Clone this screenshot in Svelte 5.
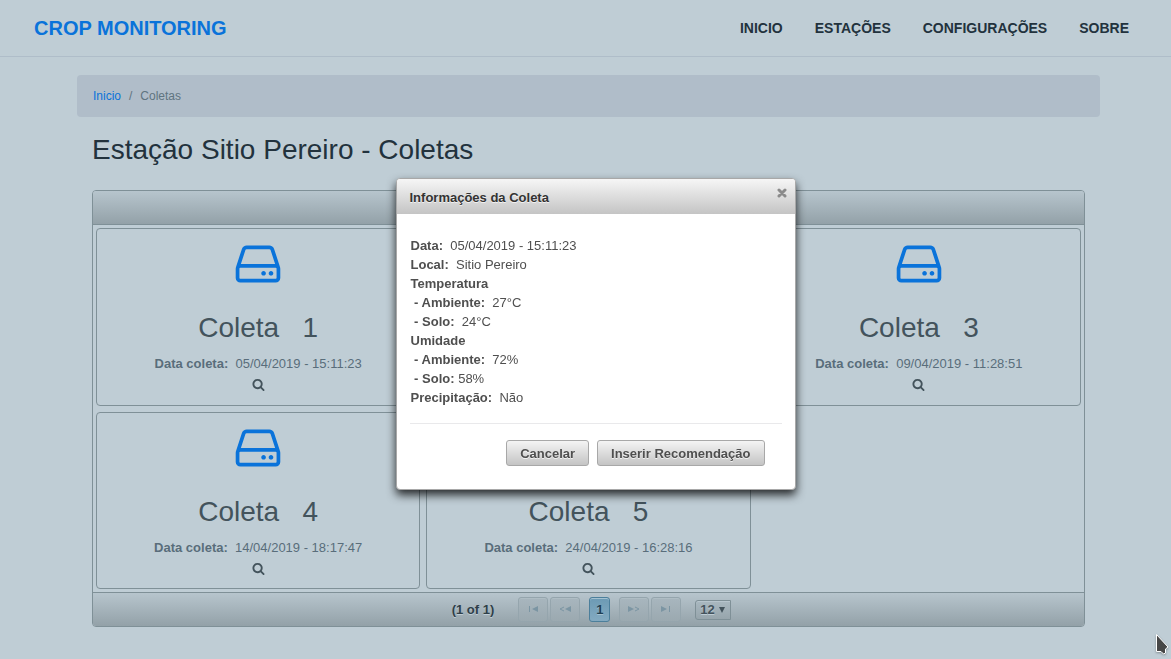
<script>
  const links = ['INICIO', 'ESTAÇÕES', 'CONFIGURAÇÕES', 'SOBRE'];
  const coletas = [
    { id: 1, data: '05/04/2019 - 15:11:23' },
    { id: 2, data: '' },
    { id: 3, data: '09/04/2019 - 11:28:51' },
    { id: 4, data: '14/04/2019 - 18:17:47' },
    { id: 5, data: '24/04/2019 - 16:28:16' }
  ];
  const info = [
    { label: 'Data:', value: '\u00a0 05/04/2019 - 15:11:23' },
    { label: 'Local:', value: '\u00a0 Sitio Pereiro' },
    { label: 'Temperatura', value: '' },
    { label: '\u00a0- Ambiente:', value: '\u00a0 27°C' },
    { label: '\u00a0- Solo:', value: '\u00a0 24°C' },
    { label: 'Umidade', value: '' },
    { label: '\u00a0- Ambiente:', value: '\u00a0 72%' },
    { label: '\u00a0- Solo:', value: '\u00a058%' },
    { label: 'Precipitação:', value: '\u00a0 Não' }
  ];
  let open = $state(true);
</script>

<header>
  <a class="brand" href="#inicio">CROP MONITORING</a>
  <nav>
    {#each links as link}
      <a href="#{link.toLowerCase()}">{link}</a>
    {/each}
  </nav>
</header>

<main>
  <ol class="breadcrumb">
    <li><a href="#inicio">Inicio</a></li>
    <li class="current">Coletas</li>
  </ol>

  <div class="content">
    <h1>Estação Sitio Pereiro - Coletas</h1>

    <section class="datagrid">
      <div class="grid-header"></div>
      <div class="cards">
        {#each coletas as coleta (coleta.id)}
          <article>
            <svg class="drive" viewBox="0 0 1792 1792" aria-hidden="true">
              <path d="M1168 1216q0 33-23.5 56.5t-56.5 23.5-56.5-23.5-23.5-56.5 23.5-56.5 56.5-23.5 56.5 23.5 23.5 56.5zm256 0q0 33-23.5 56.5t-56.5 23.5-56.5-23.5-23.5-56.5 23.5-56.5 56.5-23.5 56.5 23.5 23.5 56.5zm112 160v-320q0-13-9.5-22.5t-22.5-9.5h-1216q-13 0-22.5 9.5t-9.5 22.5v320q0 13 9.5 22.5t22.5 9.5h1216q13 0 22.5-9.5t9.5-22.5zm-1230-480h1180l-157-482q-4-13-16-21.5t-26-8.5h-782q-14 0-26 8.5t-16 21.5zm1358 160v320q0 66-47 113t-113 47h-1216q-66 0-113-47t-47-113v-320q0-25 16-75l197-606q17-53 63-86t101-33h782q55 0 101 33t63 86l197 606q16 50 16 75z" />
            </svg>
            <h2>Coleta &nbsp; {coleta.id}</h2>
            {#if coleta.data}
              <p><b>Data coleta:</b>&nbsp; {coleta.data}</p>
            {/if}
            <button class="search" aria-label="Ver coleta {coleta.id}" onclick={() => (open = true)}>
              <svg viewBox="0 0 1792 1792" aria-hidden="true">
                <path d="M1216 832q0-185-131.5-316.5t-316.5-131.5-316.5 131.5-131.5 316.5 131.5 316.5 316.5 131.5 316.5-131.5 131.5-316.5zm512 832q0 52-38 90t-90 38q-54 0-90-38l-343-342q-179 124-399 124-143 0-273.5-55.5t-225-150-150-225-55.5-273.5 55.5-273.5 150-225 225-150 273.5-55.5 273.5 55.5 225 150 150 225 55.5 273.5q0 220-124 399l343 343q37 37 37 90z" />
              </svg>
            </button>
          </article>
        {/each}
      </div>
      <div class="paginator">
        <span class="count">(1 of 1)</span>
        <div class="pair">
          <button disabled aria-label="Primeira">
            <svg viewBox="0 0 12 6"><path d="M2 0h1v6h-1zM11 0v6L5 3z" /></svg>
          </button>
          <button disabled aria-label="Anterior">
            <svg viewBox="0 0 12 6"><path d="M12 0v6L6 3z" /><path class="line" d="M5 1L1 3l4 2" /></svg>
          </button>
        </div>
        <button class="page">1</button>
        <div class="pair">
          <button disabled aria-label="Próxima">
            <svg viewBox="0 0 12 6"><path d="M0 0v6l6-3z" /><path class="line" d="M7 1L11 3l-4 2" /></svg>
          </button>
          <button disabled aria-label="Última">
            <svg viewBox="0 0 12 6"><path d="M9 0h1v6h-1zM1 0v6l6-3z" /></svg>
          </button>
        </div>
        <div class="rows">
          <select aria-label="Itens por página">
            <option>12</option>
            <option>24</option>
          </select>
          <svg viewBox="0 0 6 6" aria-hidden="true"><path d="M0 0h6L3 6z" /></svg>
        </div>
      </div>
    </section>
  </div>
</main>

{#if open}
  <div class="dialog" role="dialog" aria-labelledby="dialog-title">
    <div class="titlebar">
      <span id="dialog-title">Informações da Coleta</span>
      <button class="close" aria-label="Fechar" onclick={() => (open = false)}>
        <svg viewBox="0 0 10 10"><path d="M2 2l6 6M8 2l-6 6" /></svg>
      </button>
    </div>
    <div class="body">
      <div class="info">
        {#each info as row}
          <div><b>{row.label}</b>{row.value}</div>
        {/each}
      </div>
      <div class="actions">
        <button onclick={() => (open = false)}>Cancelar</button>
        <button>Inserir Recomendação</button>
      </div>
    </div>
  </div>
{/if}

<svg class="pointer" viewBox="0 0 14 22" aria-hidden="true">
  <path d="M1.500 1.500v17h4.500l2.500 2.500 2-1v-4l2.500-2z" />
</svg>

<style>
  :global(body) {
    background: #bfcdd5;
    color: #22323d;
    font-family: 'Liberation Sans', Arial, sans-serif;
    font-size: 13px;
  }
  a {
    color: #0a73da;
    text-decoration: none;
  }
  button {
    font: inherit;
    padding: 0;
    box-sizing: border-box;
  }
  header {
    display: flex;
    align-items: center;
    justify-content: space-between;
    height: 56px;
    padding: 0 42px 0 34px;
    border-bottom: 1px solid #afbdc9;
  }
  .brand {
    font-size: 20px;
    font-weight: bold;
  }
  nav {
    display: flex;
    gap: 32px;
  }
  nav a {
    color: #22323d;
    font-size: 14px;
    font-weight: bold;
  }
  main {
    padding: 18px 71px 32px 77px;
  }
  .breadcrumb {
    display: flex;
    margin: 0;
    padding: 12px 16px;
    background: #b0bdc9;
    border-radius: 4px;
    font-size: 12px;
    line-height: 18px;
    list-style: none;
  }
  .current {
    color: #5f7480;
  }
  .current::before {
    content: '/';
    padding: 0 8px;
  }
  .content {
    padding: 16px 15px 0;
  }
  h1 {
    margin: 0 0 23px;
    font-size: 28px;
    font-weight: normal;
    line-height: 34px;
  }
  .datagrid {
    border: 1px solid #7f9097;
    border-radius: 4px;
  }
  .grid-header {
    height: 33px;
    border-bottom: 1px solid #7f9097;
    border-radius: 3px 3px 0 0;
    background: linear-gradient(#b7c5cd, #93a1a8);
  }
  .cards {
    display: grid;
    grid-template-columns: repeat(3, 1fr);
    gap: 6px;
    min-height: 361px;
    padding: 3px;
  }
  article {
    display: flex;
    flex-direction: column;
    align-items: center;
    padding: 9px 0 12px;
    border: 1px solid #7f9097;
    border-radius: 4px;
    color: #43535c;
  }
  .drive {
    width: 52px;
    height: 52px;
    fill: #0a73da;
  }
  h2 {
    margin: 22px 0 10px;
    font-size: 28px;
    font-weight: normal;
    line-height: 32px;
    white-space: pre;
  }
  p {
    margin: 0;
    color: #596d7b;
    line-height: 20px;
  }
  .search {
    height: 13px;
    margin-top: 4px;
    border: 0;
    background: none;
  }
  .search svg {
    display: block;
    width: 13px;
    height: 13px;
    fill: #43535c;
  }
  .paginator {
    display: flex;
    align-items: center;
    justify-content: center;
    height: 33px;
    padding-left: 6px;
    border-top: 1px solid #7f9097;
    border-radius: 0 0 3px 3px;
    background: linear-gradient(#b7c5cd, #93a1a8);
    color: #2f3f48;
    font-weight: bold;
    text-shadow: 0 1px 0 #bfcdd5;
  }
  .count {
    margin-right: 24px;
  }
  .pair {
    display: flex;
    gap: 2px;
  }
  .pair button {
    display: grid;
    place-items: center;
    width: 30px;
    height: 25px;
    border: 1px solid #95a5ad;
    border-radius: 3px;
    background: linear-gradient(#a8b6be, #9ba9b0);
    box-shadow: inset 0 1px 0 #afbdc4;
  }
  .pair svg {
    width: 12px;
    height: 6px;
    margin-bottom: 2px;
    fill: #7b95a3;
  }
  .pair .line {
    fill: none;
    stroke: #7b95a3;
  }
  .page {
    width: 21px;
    height: 25px;
    margin: 0 9px;
    border: 1px solid #4c7f9b;
    border-radius: 3px;
    background: linear-gradient(#6c9ab4, #83aac1);
    box-shadow: inset 0 1px 0 #a5c2d1;
    color: #1e3f53;
    text-shadow: 0 1px 0 #a5c2d1;
  }
  .rows {
    display: grid;
    align-items: center;
    margin-left: 14px;
  }
  .rows select {
    grid-area: 1 / 1;
    width: 36px;
    height: 20px;
    padding: 0 4px;
    appearance: none;
    border: 1px solid #7f9097;
    border-radius: 3px 0 0 3px;
    background: linear-gradient(#a9b8c0, #97a5ac);
    box-shadow: inset 0 1px 0 #b7c5cd;
    color: #43535c;
    font: inherit;
    text-shadow: inherit;
  }
  .rows svg {
    grid-area: 1 / 1;
    justify-self: end;
    width: 6px;
    height: 6px;
    margin-right: 6px;
    fill: #43535c;
    pointer-events: none;
  }
  .dialog {
    position: fixed;
    top: 178px;
    left: calc(50% - 190px);
    width: 400px;
    box-sizing: border-box;
    border: 1px solid #a8a8a8;
    border-radius: 4px;
    background: #fff;
    box-shadow: 0 5px 10px rgba(0, 0, 0, 0.8);
    color: #4f4f4f;
  }
  .titlebar {
    display: flex;
    justify-content: space-between;
    height: 35px;
    padding: 0 8px 0 13px;
    border-radius: 3px 3px 0 0;
    background: linear-gradient(#f6f6f6, #c4c4c4);
    color: #333;
    font-weight: bold;
    line-height: 37px;
    text-shadow: 0 1px 0 rgba(255, 255, 255, 0.7);
  }
  .close {
    height: 10px;
    margin-top: 9px;
    border: 0;
    background: none;
  }
  .close svg {
    display: block;
    width: 10px;
    height: 10px;
    stroke: #8b8b8b;
    stroke-width: 3;
    stroke-linecap: round;
  }
  .body {
    padding: 22px 13px 23px;
  }
  .info {
    padding: 0 1px;
    line-height: 19px;
  }
  .actions {
    display: flex;
    justify-content: flex-end;
    gap: 8px;
    margin-top: 16px;
    padding: 16px 17px 0 0;
    border-top: 1px solid #e9e9eb;
  }
  .actions button {
    height: 26px;
    padding: 0 13px;
    border: 1px solid #a8a8a8;
    border-radius: 3px;
    background: linear-gradient(#f4f4f4, #c4c4c4);
    color: #4f4f4f;
    font-weight: bold;
    text-shadow: 0 1px 0 rgba(255, 255, 255, 0.7);
  }
  .pointer {
    position: fixed;
    right: 2px;
    bottom: 4px;
    width: 14px;
    height: 22px;
    fill: #474747;
    stroke: #fff;
    filter: drop-shadow(0 1px 1px rgba(0, 0, 0, 0.3));
    pointer-events: none;
  }
</style>
